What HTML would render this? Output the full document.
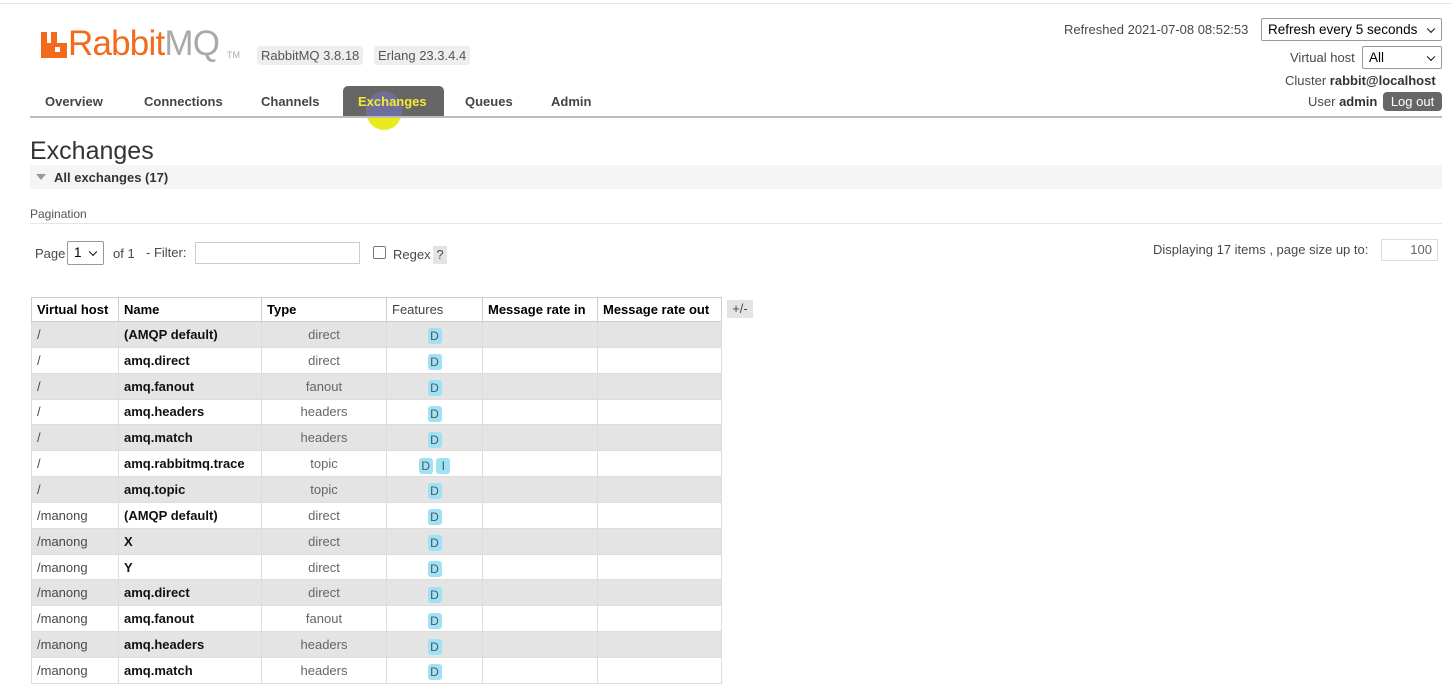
<!DOCTYPE html>
<html><head><meta charset="utf-8"><style>
body{margin:0;width:1452px;height:652px;overflow:hidden;background:#fff;font-family:"Liberation Sans",sans-serif;font-size:13px;color:#484848;position:relative}
.a{position:absolute;white-space:nowrap}
.tag{background:#eee;border-radius:3px;padding:2px 4px;color:#555}
.tab{position:absolute;top:87px;height:29px;line-height:29px;font-weight:bold;color:#444;font-size:13px}
.sel{position:absolute;border:1px solid #999;background:#fff;font-size:13.5px;color:#000;box-sizing:border-box;padding-left:6px;border-radius:2px}
.chev{position:absolute;right:7px;top:50%;width:5px;height:5px;border-right:1.5px solid #000;border-bottom:1.5px solid #000;transform:translateY(-70%) rotate(45deg)}
table{position:absolute;left:31px;top:297px;border-collapse:collapse;font-size:13px}
td,th{border:1px solid #ddd;height:25.85px;padding:0 5px;box-sizing:border-box;white-space:nowrap}
th{text-align:left;color:#000;font-weight:bold;height:24px;border-color:#ccc}
tr.g td{background:#e4e4e4}
td.n{font-weight:bold;color:#111}
td.t{text-align:center;color:#666}
td.f{text-align:center}
.D{display:inline-block;background:#9ee2f8;color:#555;border-radius:3px;width:14px;height:16px;line-height:16px;text-align:center;font-size:12px;margin-top:4px}
</style></head><body>
<div class="a" style="left:0;top:3px;width:1452px;height:1px;background:#e6e6e6"></div>
<svg class="a" style="left:41px;top:32px" width="26" height="26" viewBox="0 0 26 26"><path d="M0 0h6v11h4V0h6v11h10v15H0z" fill="#f26a1b"/><rect x="14" y="15" width="5" height="5" fill="#fff"/></svg>
<div class="a" style="left:68px;top:24px;font-size:35px;color:#f26a1b;letter-spacing:-0.8px">Rabbit<span style="color:#a9a9a9">MQ</span></div>
<div class="a" style="left:227px;top:50px;font-size:9px;color:#aaa">TM</div>
<div class="a tag" style="left:257px;top:46px">RabbitMQ 3.8.18</div>
<div class="a tag" style="left:374px;top:46px">Erlang 23.3.4.4</div>
<div class="tab" style="left:45px">Overview</div>
<div class="tab" style="left:144px">Connections</div>
<div class="tab" style="left:261px">Channels</div>
<div class="a" style="left:343px;top:86px;width:101px;height:30px;background:#666;border-radius:5px 5px 0 0"></div>
<div class="a" style="left:366px;top:92px;width:36px;height:38px;border-radius:50%;background:#ecea1a"></div>
<div class="a" style="left:366px;top:92px;width:36px;height:24px;background:#6e6e9c;border-radius:18px 18px 0 0"></div>
<div class="tab" style="left:358px;color:#f4ea34">Exchanges</div>
<div class="tab" style="left:465px">Queues</div>
<div class="tab" style="left:551px">Admin</div>
<div class="a" style="left:30px;top:116px;width:1412px;height:2px;background:#bbb"></div>
<div class="a" style="left:1064px;top:22px">Refreshed 2021-07-08 08:52:53</div>
<div class="sel" style="left:1261px;top:18px;width:181px;height:23px;line-height:21px">Refresh every 5 seconds<span class="chev"></span></div>
<div class="a" style="left:1290px;top:50px">Virtual host</div>
<div class="sel" style="left:1362px;top:46px;width:80px;height:23px;line-height:21px">All<span class="chev"></span></div>
<div class="a" style="left:1285px;top:73px">Cluster <b style="color:#333">rabbit@localhost</b></div>
<div class="a" style="left:1308px;top:94px">User <b style="color:#333">admin</b></div>
<div class="a" style="left:1383px;top:92px;width:59px;height:19px;background:#666;color:#fff;border-radius:4px;text-align:center;line-height:19px">Log out</div>
<div class="a" style="left:30px;top:137px;font-size:25px;color:#333">Exchanges</div>
<div class="a" style="left:30px;top:165px;width:1412px;height:24px;background:#f5f5f5"></div>
<div class="a" style="left:36px;top:174px;width:0;height:0;border-left:5px solid transparent;border-right:5px solid transparent;border-top:6px solid #999"></div>
<div class="a" style="left:54px;top:170px;font-weight:bold;color:#333">All exchanges (17)</div>
<div class="a" style="left:30px;top:207px;font-size:12px;color:#555">Pagination</div>
<div class="a" style="left:30px;top:223px;width:1412px;height:1px;background:#e6e6e6"></div>
<div class="a" style="left:35px;top:246px">Page</div>
<div class="sel" style="left:67px;top:241px;width:37px;height:24px;line-height:22px">1<span class="chev"></span></div>
<div class="a" style="left:113px;top:246px">of 1</div>
<div class="a" style="left:146px;top:245px">- Filter:</div>
<div class="a" style="left:195px;top:242px;width:165px;height:22px;border:1px solid #ccc;box-sizing:border-box"></div>
<div class="a" style="left:373px;top:246px;width:11px;height:11px;border:1px solid #777;border-radius:2px"></div>
<div class="a" style="left:393px;top:247px">Regex</div>
<div class="a" style="left:433px;top:246px;width:14px;height:18px;background:#e4e4e4;text-align:center;line-height:18px">?</div>
<div class="a" style="left:1153px;top:242px">Displaying 17 items , page size up to:</div>
<div class="a" style="left:1381px;top:239px;width:57px;height:22px;border:1px solid #ddd;box-sizing:border-box;text-align:right;padding-right:5px;line-height:20px;color:#666">100</div>
<table>
<tr><th style="width:87px">Virtual host</th><th style="width:143px">Name</th><th style="width:125px">Type</th><th style="width:96px;text-align:left;font-weight:normal;color:#444">Features</th><th style="width:115px">Message rate in</th><th style="width:124px">Message rate out</th></tr>
<tr class="g"><td>/</td><td class="n">(AMQP default)</td><td class="t">direct</td><td class="f"><span class="D">D</span></td><td></td><td></td></tr>
<tr><td>/</td><td class="n">amq.direct</td><td class="t">direct</td><td class="f"><span class="D">D</span></td><td></td><td></td></tr>
<tr class="g"><td>/</td><td class="n">amq.fanout</td><td class="t">fanout</td><td class="f"><span class="D">D</span></td><td></td><td></td></tr>
<tr><td>/</td><td class="n">amq.headers</td><td class="t">headers</td><td class="f"><span class="D">D</span></td><td></td><td></td></tr>
<tr class="g"><td>/</td><td class="n">amq.match</td><td class="t">headers</td><td class="f"><span class="D">D</span></td><td></td><td></td></tr>
<tr><td>/</td><td class="n">amq.rabbitmq.trace</td><td class="t">topic</td><td class="f"><span class="D">D</span> <span class="D">I</span></td><td></td><td></td></tr>
<tr class="g"><td>/</td><td class="n">amq.topic</td><td class="t">topic</td><td class="f"><span class="D">D</span></td><td></td><td></td></tr>
<tr><td>/manong</td><td class="n">(AMQP default)</td><td class="t">direct</td><td class="f"><span class="D">D</span></td><td></td><td></td></tr>
<tr class="g"><td>/manong</td><td class="n">X</td><td class="t">direct</td><td class="f"><span class="D">D</span></td><td></td><td></td></tr>
<tr><td>/manong</td><td class="n">Y</td><td class="t">direct</td><td class="f"><span class="D">D</span></td><td></td><td></td></tr>
<tr class="g"><td>/manong</td><td class="n">amq.direct</td><td class="t">direct</td><td class="f"><span class="D">D</span></td><td></td><td></td></tr>
<tr><td>/manong</td><td class="n">amq.fanout</td><td class="t">fanout</td><td class="f"><span class="D">D</span></td><td></td><td></td></tr>
<tr class="g"><td>/manong</td><td class="n">amq.headers</td><td class="t">headers</td><td class="f"><span class="D">D</span></td><td></td><td></td></tr>
<tr><td>/manong</td><td class="n">amq.match</td><td class="t">headers</td><td class="f"><span class="D">D</span></td><td></td><td></td></tr>
</table>
<div class="a" style="left:727px;top:300px;width:26px;height:18px;background:#e4e4e4;text-align:center;line-height:18px">+/-</div>
</body></html>
